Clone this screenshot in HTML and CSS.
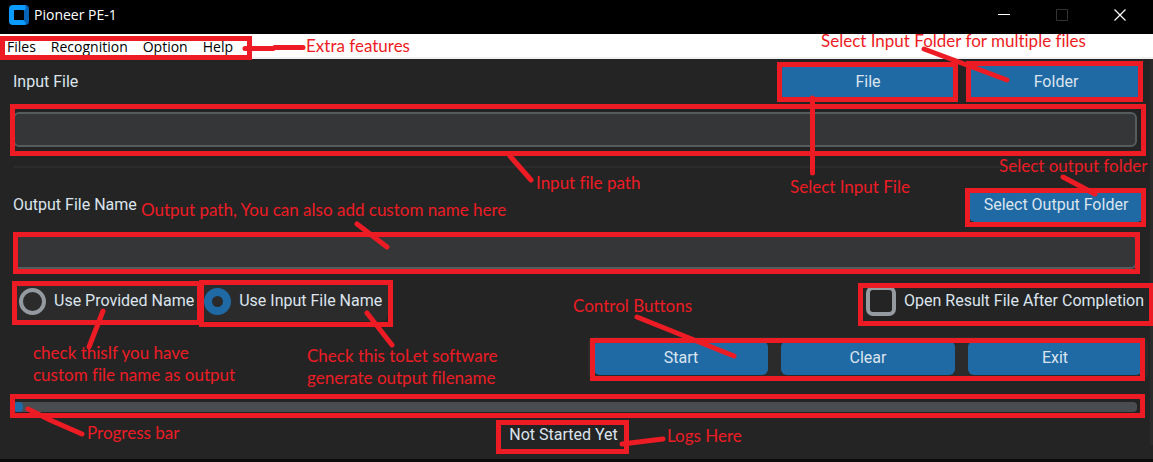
FILE: index.html
```html
<!DOCTYPE html>
<html lang="en">
<head>
<meta charset="utf-8">
<title>Pioneer PE-1</title>
<link rel="stylesheet" href="styles.css">
</head>
<body>
<div class="window">
  <header class="titlebar">
    <svg class="logo" width="20" height="20" viewBox="0 0 20 20" aria-hidden="true">
      <path fill="#0b9bff" d="M4 0h13v5H5v10h11v5H4a4 4 0 0 1-4-4V4a4 4 0 0 1 4-4z"/>
      <path fill="#0862b5" d="M16 0a4 4 0 0 1 4 4v12a4 4 0 0 1-4 4l-2-5h1V5l-1-1z"/>
      <path fill="#0b9bff" d="M13 0h3l1 3-2 3h-2zM12 15h2l3 3-1 2h-4z"/>
      <rect x="5" y="5" width="10" height="10" rx="1" fill="#000"/>
    </svg>
    <h1 class="title">Pioneer PE-1</h1>
    <div class="window-controls">
      <button class="window-button" aria-label="Minimize"><svg width="12" height="12" viewBox="0 0 12 12"><path d="M0 5.5h12" stroke="#fff"/></svg></button>
      <button class="window-button" aria-label="Maximize" disabled><svg width="12" height="12" viewBox="0 0 12 12"><path d="M.5.5h11v11H.5z" stroke="#333" fill="none"/></svg></button>
      <button class="window-button" aria-label="Close"><svg width="12" height="12" viewBox="0 0 12 12"><path d="M.5.5l11 11M11.5.5l-11 11" stroke="#fff" stroke-width="1.2"/></svg></button>
    </div>
  </header>
  <nav class="menubar">
    <button class="menu">Files</button>
    <button class="menu">Recognition</button>
    <button class="menu">Option</button>
    <button class="menu">Help</button>
  </nav>
  <main class="content">
    <div class="row">
      <label for="input-path">Input File</label>
      <div class="actions">
        <button class="button">File</button>
        <button class="button">Folder</button>
      </div>
    </div>
    <input class="field" id="input-path" type="text">
    <hr class="divider">
    <div class="row row-output">
      <label for="output-path">Output File Name</label>
      <div class="actions"><button class="button">Select Output Folder</button></div>
    </div>
    <input class="field" id="output-path" type="text">
    <div class="options">
      <div class="choices">
        <label class="choice"><input class="radio" type="radio" name="naming">Use Provided Name</label>
        <label class="choice"><input class="radio" type="radio" name="naming" checked>Use Input File Name</label>
      </div>
      <label class="choice"><input class="checkbox" type="checkbox">Open Result File After Completion</label>
    </div>
    <div class="controls">
      <button class="button">Start</button>
      <button class="button">Clear</button>
      <button class="button">Exit</button>
    </div>
    <div class="progress" role="progressbar" aria-label="Progress" aria-valuenow="1" aria-valuemin="0" aria-valuemax="100"><div class="progress-value"></div></div>
    <output class="log">Not Started Yet</output>
  </main>

  <div class="notes">
    <div class="frame frame-input"></div>
    <div class="frame frame-output"></div>
    <div class="frame frame-progress"></div>
    <div class="notes-left">
      <svg class="marks" width="740" height="462" viewBox="0 0 740 462" aria-hidden="true">
        <rect x="2.5" y="38.5" width="247" height="19"/>
        <rect x="14.5" y="283.5" width="185" height="39"/>
        <rect x="201.5" y="282.5" width="189" height="42"/>
        <rect x="498.5" y="422.5" width="128" height="29"/>
        <path d="M245 48.500H273L275 47.500H303M510 156L531 180M357 224L387 247M103 311L89 347M367 313L392 345M28 409L50 420L82 434M622 444L663 439"/>
      </svg>
      <p class="note note-menu">Extra features</p>
      <p class="note note-path">Input file path</p>
      <p class="note note-output">Output path, You can also add custom name here</p>
      <p class="note note-provided">check thisIf you have<br>custom file name as output</p>
      <p class="note note-generated">Check this toLet software<br>generate output filename</p>
      <p class="note note-progress">Progress bar</p>
      <p class="note note-log">Logs Here</p>
    </div>
    <div class="notes-right">
      <svg class="marks" width="600" height="462" viewBox="553 0 600 462" aria-hidden="true">
        <rect x="779.5" y="64.500" width="176" height="35"/>
        <rect x="968.5" y="63.500" width="172" height="36"/>
        <rect x="967.5" y="190.500" width="176" height="34"/>
        <rect x="860.5" y="285.500" width="291" height="38"/>
        <rect x="592.5" y="340.500" width="550" height="38"/>
        <path d="M924 49L1007 80M812.500 98V173M1063 177L1095 194M637 317L734 356"/>
      </svg>
      <p class="note note-folder">Select Input Folder for multiple files</p>
      <p class="note note-file">Select Input File</p>
      <p class="note note-select">Select output folder</p>
      <p class="note note-controls">Control Buttons</p>
    </div>
  </div>
</div>
</body>
</html>
```
FILE: styles.css
```css
* { box-sizing: border-box; }

body {
  margin: 0;
  background: #242424;
  color: #dce4ee;
  font: 16px/20px Roboto, sans-serif;
}

button, input { font: inherit; color: inherit; }

.window {
  position: relative;
  min-height: 100vh;
  border-bottom: 3px solid #0c0c0c;
  overflow: hidden;
}

.titlebar {
  display: flex;
  align-items: center;
  height: 34px;
  padding: 0 4px 4px 9px;
  gap: 5px;
  background: #000;
  color: #fff;
}

.title {
  margin: 0;
  font: 14px/20px "Open Sans", sans-serif;
}

.window-controls {
  display: flex;
  margin-left: auto;
}

.window-button {
  display: grid;
  place-items: center;
  width: 58px;
  height: 30px;
  padding: 0;
  border: 0;
  background: none;
}

.menubar {
  display: flex;
  gap: 15px;
  height: 25px;
  padding: 2px 7px 0;
  border-bottom: 2px solid #f0f0f0;
  background: #fff;
}

.menu {
  padding: 0;
  border: 0;
  background: none;
  color: #000;
  font: 14px/20px "Open Sans", sans-serif;
}

.content {
  display: flex;
  flex-direction: column;
  padding: 6px 0 0 13px;
  border-right: 3px solid #2b2b2b;
}

.row {
  display: flex;
  align-items: center;
  justify-content: space-between;
  padding-right: 7px;
}

.actions { display: flex; gap: 14px; }

.button {
  width: 174px;
  height: 34px;
  padding: 0;
  border: 0;
  border-radius: 6px;
  background: #1f6aa5;
}

.field {
  height: 35px;
  margin: 13px 13px 0 0;
  padding: 0 8px;
  border: 2px solid #565b5e;
  border-radius: 6px;
  background: #343638;
}

.divider {
  height: 2px;
  margin: 19px 13px 20px 0;
  border: 0;
  background: #2b2b2b;
}

.row-output + .field { margin-top: 12px; }

.options {
  display: flex;
  justify-content: space-between;
  margin-top: 12px;
  padding-right: 6px;
}

.choices {
  display: flex;
  gap: 10px;
  padding: 0 6px;
  border-radius: 6px;
  background: #2b2b2b;
}

.choice {
  display: flex;
  align-items: center;
  gap: 8px;
  height: 40px;
}

.radio, .checkbox {
  appearance: none;
  width: 27px;
  height: 27px;
  margin: 0;
  border: 4px solid #949a9f;
  border-radius: 50%;
}

.radio:checked { border: 8px solid #1f6aa5; }

.checkbox {
  width: 30px;
  height: 30px;
  border-radius: 7px;
}

.controls {
  display: flex;
  align-self: flex-end;
  gap: 13px;
  margin: 16px 2px 0 0;
  padding: 4px 6px;
  border-radius: 6px;
  background: #2b2b2b;
}

.progress {
  height: 10px;
  margin: 23px 13px 0 0;
  border-radius: 4px;
  background: #4a4d50;
}

.progress-value {
  width: 10px;
  height: 10px;
  border-radius: 4px;
  background: #1f6aa5;
}

.log {
  margin: 13px 36px 0 0;
  text-align: center;
}

/* Annotation layer drawn over the application window */
.notes {
  position: absolute;
  inset: 0;
  pointer-events: none;
  color: #ed1c24;
  font: 17px/22px Lato, sans-serif;
  font-variant-ligatures: none;
}

.notes-left { position: absolute; left: 0; top: 0; width: 740px; }
.notes-right { position: absolute; right: 0; top: 0; width: 600px; }

.marks {
  display: block;
  fill: none;
  stroke: #ed1c24;
  stroke-width: 5;
  stroke-linecap: round;
}

.frame { position: absolute; border: 5px solid #ed1c24; }
.frame-input { left: 10px; right: 7px; top: 104px; height: 52px; }
.frame-output { left: 13px; right: 13px; top: 232px; height: 42px; }
.frame-progress { left: 10px; right: 8px; top: 394px; height: 24px; }

.note { position: absolute; margin: 0; white-space: nowrap; }
.note-menu { left: 306px; top: 35px; }
.note-path { left: 536px; top: 172px; }
.note-output { left: 141px; top: 199px; }
.note-provided { left: 33px; top: 342px; }
.note-generated { left: 307px; top: 345px; }
.note-progress { left: 87px; top: 422px; }
.note-log { left: 667px; top: 425px; }
.note-folder { left: 268px; top: 30px; }
.note-file { left: 237px; top: 176px; }
.note-select { left: 446px; top: 155px; }
.note-controls { left: 20px; top: 295px; }
```
